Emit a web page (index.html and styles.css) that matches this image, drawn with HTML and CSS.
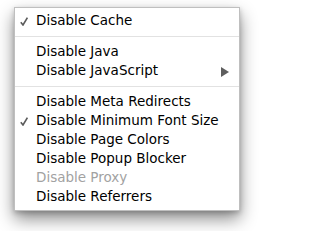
FILE: index.html
```html
<!DOCTYPE html>
<html>
<head>
<meta charset="utf-8">
<link rel="stylesheet" href="styles.css">
</head>
<body>
<div class="stage">
<div class="menu">
  <div class="item"><span class="gutter"><svg class="check" width="8" height="9" viewBox="0 0 8 9"><path d="M0.8 5.2 L3 8 L7.4 0.6" fill="none" stroke="#5b5b5b" stroke-width="1.6"/></svg></span><span class="label">Disable Cache</span></div>
  <div class="sep"></div>
  <div class="item"><span class="gutter"></span><span class="label">Disable Java</span></div>
  <div class="item"><span class="gutter"></span><span class="label">Disable JavaScript</span><svg class="arrow" width="8" height="10" viewBox="0 0 8 10"><polygon points="0,0 8,5 0,10" fill="#5e5e5e"/></svg></div>
  <div class="sep"></div>
  <div class="item"><span class="gutter"></span><span class="label">Disable Meta Redirects</span></div>
  <div class="item"><span class="gutter"><svg class="check" width="8" height="9" viewBox="0 0 8 9"><path d="M0.8 5.2 L3 8 L7.4 0.6" fill="none" stroke="#5b5b5b" stroke-width="1.6"/></svg></span><span class="label">Disable Minimum Font Size</span></div>
  <div class="item"><span class="gutter"></span><span class="label">Disable Page Colors</span></div>
  <div class="item"><span class="gutter"></span><span class="label">Disable Popup Blocker</span></div>
  <div class="item disabled"><span class="gutter"></span><span class="label">Disable Proxy</span></div>
  <div class="item"><span class="gutter"></span><span class="label">Disable Referrers</span></div>
</div>
</div>
</body>
</html>
```
FILE: styles.css
```css
html, body {
  margin: 0;
  padding: 0;
  background: #ffffff;
}
body {
  font-family: "DejaVu Sans", "Liberation Sans", sans-serif;
  font-size: 13.5px;
  color: #000;
  min-height: 231px;
}
.stage {
  width: 254px;
  height: 231px;
  box-sizing: border-box;
  padding: 7px 14px 0 14px;
}
.menu {
  box-sizing: border-box;
  width: 226px;
  padding: 3px 0 4px 0;
  background: #fff;
  border: 1px solid rgba(0, 0, 0, 0.25);
  box-shadow: 0 8px 16px rgba(0, 0, 0, 0.45), 0 2px 5px rgba(0, 0, 0, 0.2);
}
.item {
  display: flex;
  align-items: center;
  height: 19px;
  padding-right: 10px;
}
.gutter {
  width: 21px;
  flex: none;
  display: flex;
  justify-content: flex-end;
  padding-right: 8px;
  box-sizing: border-box;
}
.check {
  display: block;
  margin-top: 1px;
}
.label {
  flex: 1;
  white-space: nowrap;
  line-height: 19px;
}
.arrow {
  display: block;
  flex: none;
  margin-top: 2px;
}
.disabled .label {
  color: #a2a2a2;
}
.sep {
  height: 12px;
  display: flex;
  align-items: center;
}
.sep::before {
  content: "";
  display: block;
  width: 100%;
  height: 1px;
  background: #e2e2e2;
}
```
